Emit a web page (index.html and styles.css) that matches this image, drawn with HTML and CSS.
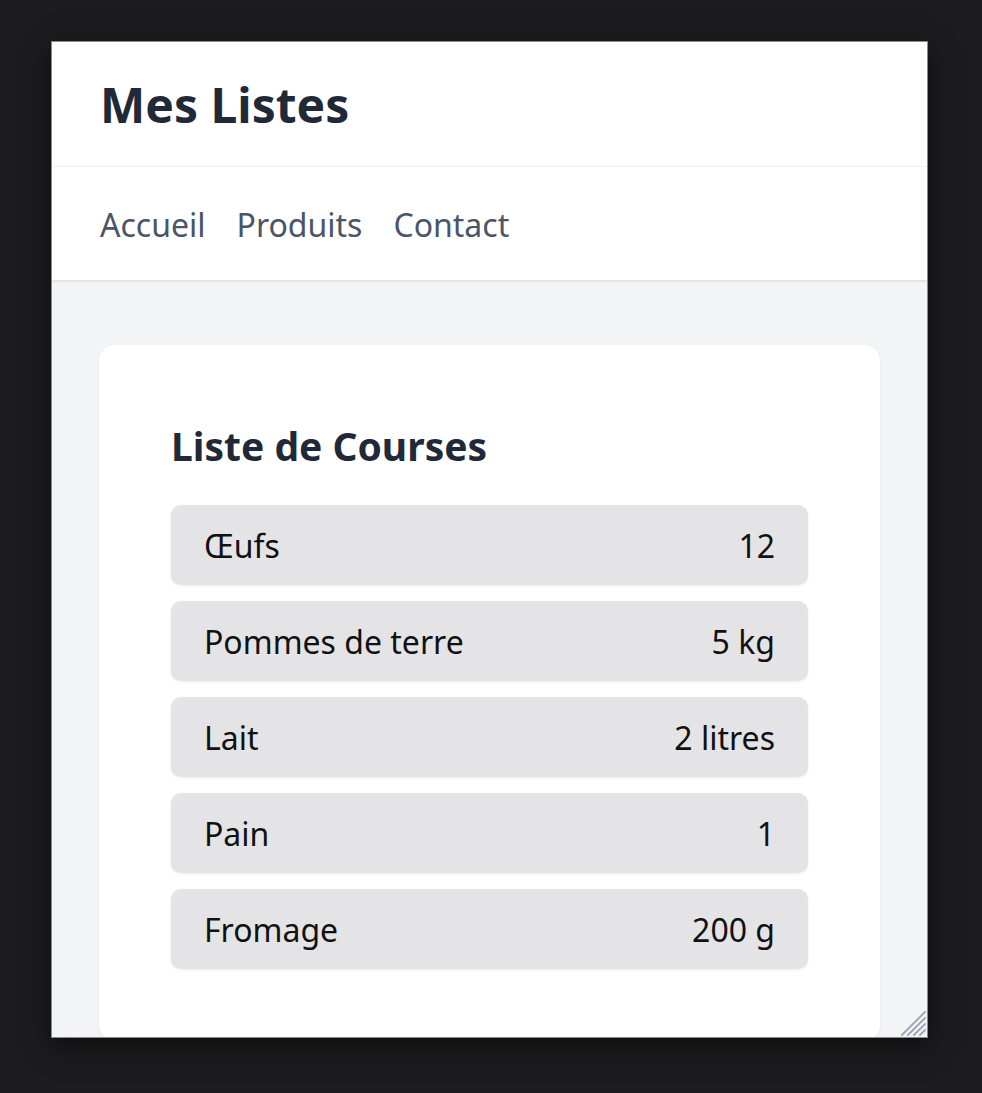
FILE: index.html
```html
<!DOCTYPE html>
<html lang="fr">
<head>
<meta charset="utf-8">
<title>Mes Listes</title>
<link rel="stylesheet" href="styles.css">
</head>
<body>
<div class="window">
  <header class="header">
    <h1 class="site-title">Mes Listes</h1>
  </header>
  <nav class="nav">
    <a class="nav-link" href="#">Accueil</a>
    <a class="nav-link" href="#">Produits</a>
    <a class="nav-link" href="#">Contact</a>
  </nav>
  <main class="main">
    <section class="card">
      <h2 class="card-title">Liste de Courses</h2>
      <ul class="list">
        <li class="item"><span>Œufs</span><span>12</span></li>
        <li class="item"><span>Pommes de terre</span><span>5 kg</span></li>
        <li class="item"><span>Lait</span><span>2 litres</span></li>
        <li class="item"><span>Pain</span><span>1</span></li>
        <li class="item"><span>Fromage</span><span>200 g</span></li>
      </ul>
    </section>
  </main>
  <svg class="grip" width="26" height="26" viewBox="0 0 26 26" aria-hidden="true">
    <g stroke="#9ca3af" stroke-width="1.8" stroke-linecap="square">
      <line x1="2" y1="25" x2="25" y2="2"/>
      <line x1="8" y1="25" x2="25" y2="8"/>
      <line x1="14" y1="25" x2="25" y2="14"/>
      <line x1="20" y1="25" x2="25" y2="20"/>
    </g>
  </svg>
</div>
</body>
</html>
```

FILE: styles.css
```css
html, body {
  margin: 0;
  padding: 0;
}
body {
  background: #1c1c1e;
  font-family: "Noto Sans", "Open Sans", sans-serif;
  padding: 41px 0 0 51px;
  height: 1093px;
  box-sizing: border-box;
  overflow: hidden;
}
.window {
  position: relative;
  width: 875px;
  height: 995px;
  border: 1px solid #8a8a8a;
  background: #f3f4f6;
  overflow: hidden;
  box-shadow: 0 8px 24px rgba(0, 0, 0, 0.55);
}
.header {
  background: #ffffff;
  height: 125px;
  box-sizing: border-box;
  padding: 0 48px;
  display: flex;
  align-items: center;
  border-bottom: 1px solid #f3f4f6;
}
.site-title {
  margin: 0;
  font-size: 48px;
  font-weight: 700;
  color: #1f2937;
  line-height: 1.2;
  padding-top: 2px;
}
.nav {
  background: #ffffff;
  height: 113px;
  box-sizing: border-box;
  padding: 2px 48px 0 48px;
  display: flex;
  align-items: center;
  gap: 31px;
  box-shadow: 0 1px 3px rgba(0, 0, 0, 0.12);
  position: relative;
}
.nav-link {
  color: #4a5568;
  text-decoration: none;
  font-size: 32px;
}
.main {
  padding: 65px 47px 48px 47px;
}
.card {
  background: #ffffff;
  border-radius: 16px;
  padding: 74px 72px 72px 72px;
  box-shadow: 0 1px 3px rgba(0, 0, 0, 0.06);
}
.card-title {
  margin: 0 0 32px 0;
  font-size: 39px;
  font-weight: 700;
  color: #1f2937;
  line-height: 54px;
}
.list {
  list-style: none;
  margin: 0;
  padding: 0;
  display: flex;
  flex-direction: column;
  gap: 16px;
}
.item {
  background: #e4e4e7;
  border-radius: 10px;
  height: 80px;
  box-sizing: border-box;
  padding: 0 33px;
  display: flex;
  align-items: center;
  justify-content: space-between;
  font-size: 32px;
  color: #111111;
  box-shadow: 0 1px 3px rgba(0, 0, 0, 0.08);
}
.grip {
  position: absolute;
  right: 1px;
  bottom: 1px;
}
```
